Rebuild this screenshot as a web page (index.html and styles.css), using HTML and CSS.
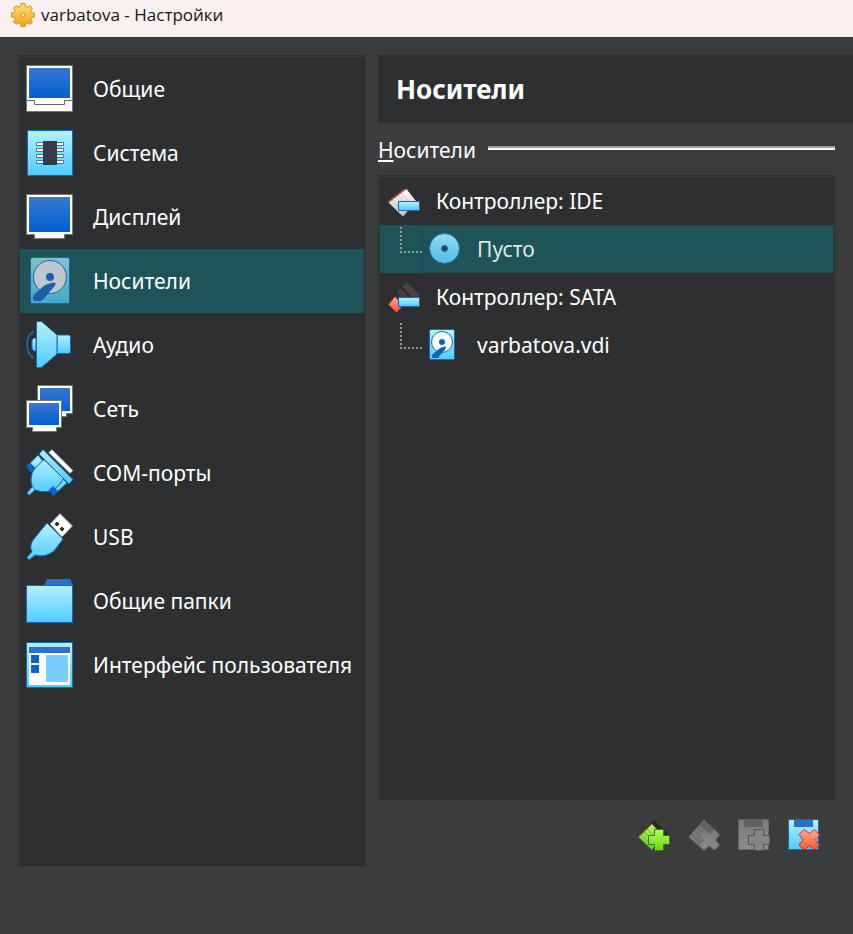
FILE: index.html
```html
<!DOCTYPE html>
<html lang="ru">
<head>
<meta charset="utf-8">
<meta name="viewport" content="width=device-width, initial-scale=1">
<title>varbatova - Настройки</title>
<link rel="stylesheet" href="styles.css">
</head>
<body>
<svg class="defs" width="0" height="0" aria-hidden="true">
  <defs>
    <linearGradient id="blue" x1="0" y1="0" x2="0" y2="1"><stop offset="0" stop-color="#3878d0"/><stop offset="1" stop-color="#0060d0"/></linearGradient>
    <linearGradient id="cyan" x1="0" y1="0" x2="0" y2="1"><stop offset="0" stop-color="#b4f0ff"/><stop offset="1" stop-color="#50ccff"/></linearGradient>
    <linearGradient id="dim" x1="0" y1="0" x2="0" y2="1"><stop offset="0" stop-color="#83c0cb"/><stop offset="1" stop-color="#42a9cc"/></linearGradient>
    <linearGradient id="disc" x1="0" y1="0" x2="0" y2="1"><stop offset="0" stop-color="#98dcec"/><stop offset="1" stop-color="#4cbde8"/></linearGradient>
    <linearGradient id="paper" x1="0" y1="0" x2="0" y2="1"><stop offset="0" stop-color="#fff"/><stop offset="1" stop-color="#c4c4c4"/></linearGradient>
    <linearGradient id="green" x1="0" y1="0" x2="0" y2="1"><stop offset="0" stop-color="#b4f85c"/><stop offset="1" stop-color="#66d810"/></linearGradient>
    <linearGradient id="red" x1="0" y1="0" x2="0" y2="1"><stop offset="0" stop-color="#ffb09a"/><stop offset="1" stop-color="#fa5028"/></linearGradient>
    <linearGradient id="gray" x1="0" y1="0" x2="0" y2="1"><stop offset="0" stop-color="#7a7a7a"/><stop offset="1" stop-color="#8c8c8c"/></linearGradient>
    <linearGradient id="gold" x1="0" y1="0" x2="0" y2="1"><stop offset="0" stop-color="#ffdf70"/><stop offset="1" stop-color="#f8a020"/></linearGradient>
  </defs>
</svg>

<header class="titlebar">
  <svg class="icon-title" viewBox="0 0 24 24" aria-hidden="true">
    <path d="M9.5 3.5 10 .5h4l.5 3 1.800.8L18.800 2.500 21.500 5.200 19.700 7.700 20.500 9.500 23.500 10v4l-3 .5-.8 1.800 1.800 2.500-2.700 2.700-2.500-1.800-1.800.8-.5 3h-4l-.5-3-1.800-.8-2.500 1.800-2.700-2.700 1.800-2.500-.8-1.800-3-.5v-4l3-.5.8-1.800L2.500 5.200 5.200 2.500 7.700 4.300Z" fill="url(#gold)" stroke="#de8524" stroke-linejoin="round"/>
    <circle cx="12" cy="12" r="2" fill="#faf0f0" stroke="#de8524"/>
  </svg>
  <span>varbatova - Настройки</span>
</header>

<div class="dialog">
  <nav class="sidebar panel" aria-label="Разделы">
    <a class="nav-item" href="#general">
      <svg class="icon-nav" viewBox="0 0 48 48" aria-hidden="true"><path d="M.5.5h46v46H.5Z" fill="#fff" stroke="#77777a"/><path d="M3 3h41v30H3Z" fill="url(#blue)"/><path d="M1 35.500h7.500v4h30v-4H46" fill="none" stroke="#666"/></svg>
      <span>Общие</span>
    </a>
    <a class="nav-item" href="#system">
      <svg class="icon-nav" viewBox="0 0 48 48" aria-hidden="true"><path d="M1.500 1.500h45v45h-45Z" fill="url(#cyan)" stroke="#1668bd"/><g fill="#fff" stroke="#3c78a8"><path d="M10.500 13.500h27v3h-27ZM10.500 19.500h27v3h-27ZM10.500 25.500h27v3h-27ZM10.500 31.500h27v3h-27Z"/></g><path d="M17 12h14v24H17Z" fill="#363b45"/></svg>
      <span>Система</span>
    </a>
    <a class="nav-item" href="#display">
      <svg class="icon-nav" viewBox="0 0 48 48" aria-hidden="true"><path d="M.5 1.500h46v40h-8v4h-30v-4h-8Z" fill="#fff" stroke="#77777a"/><path d="M3 4h41v35H3Z" fill="url(#blue)"/></svg>
      <span>Дисплей</span>
    </a>
    <a class="nav-item active" href="#storage" aria-current="page">
      <svg class="icon-nav" viewBox="0 0 48 48" aria-hidden="true"><rect x="4.500" y=".5" width="39" height="46" rx="2" fill="url(#dim)" stroke="#1668a8"/><circle cx="24" cy="20" r="16.500" fill="#bcc8cb" stroke="#1d63a5"/><circle cx="24" cy="20" r="4" fill="#1d60a8"/><path d="M29.500 26 27 25.500 19 28 7.500 38Q5.500 42 9 44h6Q18 43 20 39l8-9Q30 28 29.500 26Z" fill="#1d60a8"/></svg>
      <span>Носители</span>
    </a>
    <a class="nav-item" href="#audio">
      <svg class="icon-nav" viewBox="0 0 48 48" aria-hidden="true"><path d="M7.500 10.500C-1 15-1 32 7.500 37" fill="none" stroke="#2767b2" stroke-width="1.600"/><g fill="url(#cyan)" stroke="#1c66b4"><path d="M10 17H8q-2 1-2 3v7q0 2 2 3h2Z"/><path d="M31 14h11.500q2 0 2 2v14.500q0 2-2 2H31Z"/><path d="M10.500.5h5L31 14v19L15.500 46.500h-5Z"/></g></svg>
      <span>Аудио</span>
    </a>
    <a class="nav-item" href="#network">
      <svg class="icon-nav" viewBox="0 0 48 48" aria-hidden="true"><path d="M11.500.5h35v28h-6v3h-23v-3h-6Z" fill="#fff" stroke="#77777a"/><path d="M14 3h30v23H14Z" fill="url(#blue)"/><path d="M.5 15.500h35v27h-5v4h-24v-4h-6Z" fill="#fff" stroke="#77777a"/><path d="M3 18h30v22H3Z" fill="url(#blue)"/></svg>
      <span>Сеть</span>
    </a>
    <a class="nav-item" href="#serial">
      <svg class="icon-nav" viewBox="0 0 48 48" aria-hidden="true"><path d="m26 .5 21 21-3 3L22.500 3.500Z" fill="#fff" stroke="#77777a" stroke-width=".6"/><g fill="url(#cyan)" stroke="#1c66b4"><path d="M12 6 1 17.500 5 23l12-11ZM41 34 27.500 46.500 23 41l13-12Z"/><path d="m1 44 6-7 3 3-7 6.500Z"/><path d="M18 10.500 37.500 29.500 33 36Q26 44 15 42.500L9 41Q5 37 5 31 5 24 9 19Z"/><path d="M17 .5 47 30.500 43 35 13 5Z"/></g><path d="m.5 18 4-4 5 5-4.500 4.500ZM23 41l4-4 5 5-4.500 5Z" fill="#0863ce"/></svg>
      <span>COM-порты</span>
    </a>
    <a class="nav-item" href="#usb">
      <svg class="icon-nav" viewBox="0 0 48 48" aria-hidden="true"><path d="M34 .5 46.500 13 36 24 24 11Z" fill="#fff" stroke="#88888a"/><path d="m29 11 2-2 2 2-2 2ZM34 16l2-2 2 2-2 2Z" fill="#333" stroke="#333"/><path d="m1 44.500 5-6Q3 34 7 27L21 10 37 26 28 38Q19 45 9 42L3 47Z" fill="url(#cyan)" stroke="#1c66b4"/></svg>
      <span>USB</span>
    </a>
    <a class="nav-item" href="#folders">
      <svg class="icon-nav" viewBox="0 0 48 48" aria-hidden="true"><path d="M18 8.500 21 2h23.500q1 4 2.500 6.500Z" fill="#2b70cc"/><path d="M.5 8.500h46v37H.5Z" fill="url(#cyan)" stroke="#1668bd"/></svg>
      <span>Общие папки</span>
    </a>
    <a class="nav-item" href="#interface">
      <svg class="icon-nav" viewBox="0 0 48 48" aria-hidden="true"><path d="M.5 1.500h46v45H.5Z" fill="url(#cyan)" stroke="#1668bd"/><path d="M3 12h41v32H3Z" fill="#fff"/><path d="M3 6h41v6H3Z" fill="#2d71cb"/><path d="M5 14h8v8H5ZM5 24h8v8H5Z" fill="#0c66d0"/><path d="M20 14h22v27H20Z" fill="#78ceff"/></svg>
      <span>Интерфейс пользователя</span>
    </a>
  </nav>

  <main class="content">
    <h1 class="page-title">Носители</h1>
    <section class="storage">
      <h2 class="group-title"><span><u>Н</u>осители</span></h2>
      <ul class="tree panel">
        <li>
          <div class="tree-row">
            <svg class="icon-tree" viewBox="0 0 32 32" aria-hidden="true"><path d="M16 .5 31.500 16 15 31.500.5 17Z" fill="#29292b" stroke="#3d3e40"/><path d="M.5 17.500 18.500 4 28 16 15 31.500Z" fill="url(#paper)"/><path d="m4 15 13 14M7 12l12 13M10 10l12 13M13 8l10 11" stroke="#b4b0b0" stroke-width=".7"/><path d="M.5 17 17 4" stroke="#d0532e" stroke-width="1.400"/><path d="M10.500 16.500h21v9h-21Z" fill="url(#cyan)" stroke="#1c66b4"/></svg>
            <span>Контроллер: IDE</span>
          </div>
          <ul class="branch">
            <li class="tree-row selected">
              <div class="leaf">
                <svg class="icon-tree" viewBox="0 0 32 32" aria-hidden="true"><circle cx="15.500" cy="15.500" r="15" fill="url(#disc)" stroke="#1670ad"/><circle cx="15.500" cy="15.500" r="3" fill="#1c5158" stroke="#1764a0"/></svg>
                <span>Пусто</span>
              </div>
            </li>
          </ul>
        </li>
        <li>
          <div class="tree-row">
            <svg class="icon-tree" viewBox="0 0 32 32" aria-hidden="true"><path d="M18.500 1 31.500 14 22 24 9 11Z" fill="#444446"/><path d="m13 6 12 13" stroke="#222" stroke-width="1.500"/><path d="m7 15.500 8 9L8.500 31.500.5 23.500Z" fill="url(#red)" stroke="#b33b20"/><path d="M10.500 16.500h21v9h-21Z" fill="url(#cyan)" stroke="#1c66b4"/></svg>
            <span>Контроллер: SATA</span>
          </div>
          <ul class="branch">
            <li class="tree-row">
              <div class="leaf">
                <svg class="icon-tree" viewBox="0 0 32 32" aria-hidden="true"><rect x=".5" y=".5" width="25" height="30" rx="1.500" fill="url(#cyan)" stroke="#1668bd"/><circle cx="13" cy="13" r="10.500" fill="#fff" stroke="#1c66b4"/><circle cx="13" cy="13" r="3" fill="#1462b8"/><path d="m17 17-6 2-8 7q-1 2 1 3h5l3-4 4-4Z" fill="#1462b8"/></svg>
                <span>varbatova.vdi</span>
              </div>
            </li>
          </ul>
        </li>
      </ul>
      <div class="toolbar">
        <button type="button" aria-label="Добавить контроллер"><svg class="icon-tree" viewBox="0 0 32 32" aria-hidden="true"><path d="M16 1 31.500 16 15 31 .5 18Z" fill="#272b25"/><path d="M.5 18 14 5 24 16 14 31Z" fill="url(#green)" stroke="#3f8b12" stroke-width=".7"/><path d="m3 15 11 13M6 12.500l12 13M9 9.500l10 11" stroke="#5cab24" stroke-width=".8"/><path d="M.5 18 14 5" stroke="#c7601e"/><path d="M16.500 10.500h9v6h6v9h-6v6h-9v-6h-6v-9h6Z" fill="url(#green)" stroke="#377a12"/></svg></button>
        <button type="button" aria-label="Удалить контроллер" disabled><svg class="icon-tree" viewBox="0 0 32 32" aria-hidden="true"><path d="M.5 18 16 .5 31.500 16 15 31Z" fill="#777"/><path d="m11 6 5-5.500 14 14-4 3Z" fill="#626262"/><path d="m4 15 11 12M7 12l9 9M10 9l9 9" stroke="#606060" stroke-width=".8"/><path d="m16 10.500 5.500 4 5-4 5 5.500-4 5 4 5-5 5-5-4-5.500 4-5-5 4-5-4-5.500Z" fill="url(#gray)" stroke="#686868"/></svg></button>
        <button type="button" aria-label="Добавить устройство" disabled><svg class="icon-tree" viewBox="0 0 32 32" aria-hidden="true"><rect x=".5" y=".5" width="30" height="30" rx="1" fill="url(#gray)" stroke="#666"/><path d="M6 1h19v7H6Z" fill="#626262"/><path d="M16.500 10.500h9v6h6v9h-6v6h-9v-6h-6v-9h6Z" fill="#858585" stroke="#565656"/></svg></button>
        <button type="button" aria-label="Удалить устройство"><svg class="icon-tree" viewBox="0 0 32 32" aria-hidden="true"><rect x=".5" y=".5" width="30" height="30" rx="1" fill="url(#cyan)" stroke="#1668bd"/><path d="M6 1h19v7H6Z" fill="#266fcd"/><path d="m16 10.500 5.500 4 5-4 5 5.500-4 5 4 5-5 5-5-4-5.500 4-5-5 4-5-4-5.500Z" fill="url(#red)" stroke="#b5391c" stroke-linejoin="round"/></svg></button>
      </div>
    </section>
  </main>
</div>
</body>
</html>
```

FILE: styles.css
```css
* { box-sizing: border-box; }

body {
  margin: 0;
  min-height: 100vh;
  display: flex;
  flex-direction: column;
  background: #3b3c3e;
  color: #fff;
  font: 21px/32px "Noto Sans", sans-serif;
}

ul { list-style: none; margin: 0; padding: 0; }
svg { display: block; flex: none; }
.defs { position: absolute; }

.titlebar {
  display: flex;
  align-items: center;
  gap: 6px;
  height: 37px;
  padding: 0 11px 8px;
  background: #faf0f0;
  color: #151515;
  font: 17px/28px "Open Sans", sans-serif;
}
.icon-title { width: 24px; height: 24px; }

.dialog {
  flex: 1;
  display: grid;
  grid-template-columns: minmax(0, 347px) minmax(0, 1fr);
  gap: 12px;
  padding: 18px 0 68px 18px;
}

.panel {
  background: #2e2f31;
  border: 1px solid #2d2e30;
  box-shadow: inset 1px 1px #3b3c3e;
}

.sidebar { padding: 1px 0; }
.nav-item {
  display: flex;
  align-items: center;
  gap: 19px;
  height: 64px;
  margin-left: 1px;
  padding: 0 6px;
  color: inherit;
  text-decoration: none;
  white-space: nowrap;
}
.nav-item.active { background: #1f535a; }
.icon-nav { width: 48px; height: 48px; }

.content { display: flex; flex-direction: column; min-width: 0; }
.page-title {
  margin: 0 0 11px 1px;
  padding: 18px;
  background: #2e2f31;
  font-size: 26px;
  font-weight: 700;
  line-height: 32px;
}

.storage {
  flex: 1;
  display: flex;
  flex-direction: column;
  margin: 0 18px 0 1px;
}
.group-title {
  display: flex;
  align-items: center;
  gap: 12px;
  margin: 0 0 9px;
  font-size: 21px;
  font-weight: 400;
}
.group-title::after {
  content: "";
  flex: 1;
  height: 4px;
  margin-bottom: 4px;
  background: linear-gradient(#a0a0a0 50%, #fff 50%);
}

.tree { flex: 1; padding: 1px 0; }
.tree-row {
  display: flex;
  align-items: center;
  gap: 16px;
  height: 48px;
  margin-left: 1px;
  padding-left: 8px;
}
.icon-tree { width: 32px; height: 32px; }
.branch .tree-row {
  gap: 0;
  padding-left: 20px;
}
.branch .tree-row::before {
  content: "";
  align-self: flex-start;
  width: 20px;
  height: 24px;
  margin-top: 2px;
  border: dotted #969a9b;
  border-width: 0 0 2px 2px;
}
.leaf {
  flex: 1;
  align-self: stretch;
  display: flex;
  align-items: center;
  gap: 16px;
  padding-left: 6px;
  border: 1px solid transparent;
}
.selected { background: #1f535a; color: #dce7e8; }
.selected .leaf { border-color: #244c50; }

.toolbar {
  display: flex;
  justify-content: flex-end;
  gap: 18px;
  padding: 19px 15px 15px;
}
.toolbar button {
  padding: 0;
  border: 0;
  background: none;
}
```
